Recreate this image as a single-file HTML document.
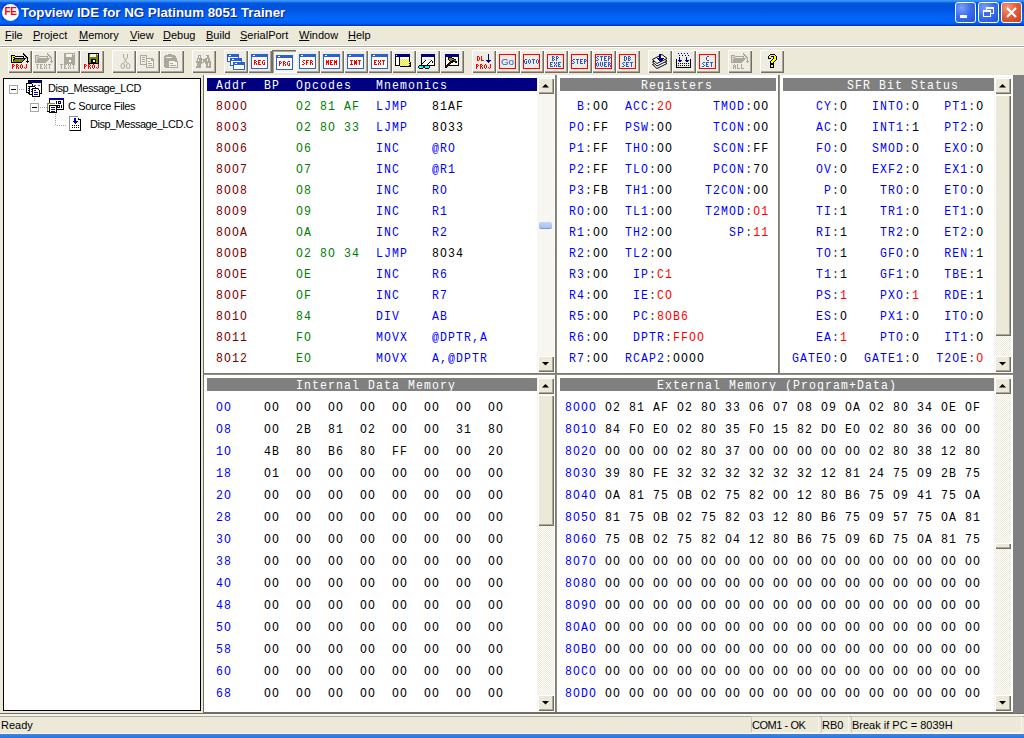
<!DOCTYPE html><html><head><meta charset='utf-8'><style>
*{margin:0;padding:0;box-sizing:border-box}
html,body{width:1024px;height:738px;overflow:hidden;background:#ECE9D8;position:relative}
.a{position:absolute}
.m{position:absolute;font-family:"Liberation Mono", monospace;font-size:11.5px;letter-spacing:1.1px;line-height:20px;white-space:pre;transform:scaleY(1.17);transform-origin:0 0;margin-top:-2px}
.s{position:absolute;font-family:"Liberation Sans", sans-serif;font-size:11px;line-height:14px;white-space:pre;color:#000}
.bl{color:#0000FF} .rd{color:#FF0000} .dr{color:#800000} .gr{color:#008000} .bk{color:#000} .cg{color:#404040}
u{text-decoration:none;border-bottom:1px solid #000}
</style></head><body>
<div class='a' style='left:0;top:0;width:1024px;height:26px;background:linear-gradient(to bottom,#3A8CF3 0px,#3F96F5 1px,#1A74F0 2px,#0058E6 3px,#0054D8 5px,#0053D9 8px,#0055E3 10px,#005CEE 13px,#0064F8 16px,#0063F8 22px,#005AEC 24px,#0038CA 25px,#0030C0 26px)'></div>
<div class='a' style='left:2px;top:4px;width:16px;height:16px;background:#0A3ED8'></div>
<div class='a' style='left:2px;top:4px;width:17px;height:17px;border-radius:50%;background:#fff'></div>
<div class='a' style='left:3px;top:6px;width:15px;font:bold 10px "Liberation Sans", sans-serif;line-height:12px;color:#F00;text-align:center;letter-spacing:-0.5px'>FE</div>
<div class='a' style='left:21px;top:4px;font:bold 13.3px "Liberation Sans", sans-serif;line-height:18px;color:#fff;white-space:pre;text-shadow:1px 1px 0 #0A1E8C'>Topview IDE for NG Platinum 8051 Trainer</div>
<div class='a' style='left:955px;top:2px;width:21px;height:21px;border:1px solid #fff;border-radius:3px;background:radial-gradient(circle at 30% 25%,#7DA2F8 0%,#3C6EF0 45%,#1F50D8 100%);overflow:hidden'><div class='a' style='left:4px;top:12px;width:7px;height:3px;background:#fff'></div></div>
<div class='a' style='left:978px;top:2px;width:21px;height:21px;border:1px solid #fff;border-radius:3px;background:radial-gradient(circle at 30% 25%,#7DA2F8 0%,#3C6EF0 45%,#1F50D8 100%);overflow:hidden'><div class='a' style='left:7px;top:4px;width:8px;height:7px;border:1px solid #fff;border-top-width:2px'></div><div class='a' style='left:4px;top:7px;width:8px;height:7px;border:1px solid #fff;border-top-width:2px;background:#3A6CEE'></div></div>
<div class='a' style='left:1001px;top:2px;width:21px;height:21px;border:1px solid #fff;border-radius:3px;background:radial-gradient(circle at 30% 25%,#F49A80 0%,#E0603A 45%,#C53F1E 100%);overflow:hidden'><svg class='a' style='left:0;top:0' width='19' height='19'><path d='M5 5 L14 14 M14 5 L5 14' stroke='#fff' stroke-width='2'/></svg></div>
<div class='a' style='left:0;top:26px;width:1024px;height:1px;background:#F8F4DE'></div>
<div class='s' style='left:5px;top:28px'><span style='text-decoration:underline;text-underline-offset:1px'>F</span>ile</div>
<div class='s' style='left:33px;top:28px'><span style='text-decoration:underline;text-underline-offset:1px'>P</span>roject</div>
<div class='s' style='left:79px;top:28px'><span style='text-decoration:underline;text-underline-offset:1px'>M</span>emory</div>
<div class='s' style='left:130px;top:28px'><span style='text-decoration:underline;text-underline-offset:1px'>V</span>iew</div>
<div class='s' style='left:163px;top:28px'><span style='text-decoration:underline;text-underline-offset:1px'>D</span>ebug</div>
<div class='s' style='left:206px;top:28px'><span style='text-decoration:underline;text-underline-offset:1px'>B</span>uild</div>
<div class='s' style='left:240px;top:28px'><span style='text-decoration:underline;text-underline-offset:1px'>S</span>erialPort</div>
<div class='s' style='left:299px;top:28px'><span style='text-decoration:underline;text-underline-offset:1px'>W</span>indow</div>
<div class='s' style='left:348px;top:28px'><span style='text-decoration:underline;text-underline-offset:1px'>H</span>elp</div>
<div class='a' style='left:0;top:45px;width:1024px;height:1px;background:#FFFFFF'></div>
<div class='a' style='left:0;top:46px;width:1024px;height:1px;background:#A6A59E'></div>
<div class='a' style='left:0;top:47px;width:1024px;height:1px;background:#FFFFFF'></div>
<div class='a' style='left:8px;top:50px;width:24px;height:23px;background:#EFEDE3;box-shadow:inset 1px 1px 0 #fff,inset -1px -1px 0 #716F64,inset -2px -2px 0 #ACA899'></div>
<svg class='a' style='left:8px;top:50px' width='24' height='23' shape-rendering='crispEdges'><path d='M3 5h4v1h9v2h-1v-1h-8v1h-3v5h-1z' fill='#000'/><path d='M4 6h3v1h-3z M4 7h1v5h-1z' fill='#FFFF00'/><path d='M6 8h12v1h-1l-3 4h-10z' fill='#000'/><path d='M7 9h9l-2 3h-9z' fill='#808000'/><path d='M15 3h1v1h1v1h1v1h1v1h1v5h-1v-4h-1v-1h-1v-1h-1v-1h-1z M17 11h4l-2 2z' fill='#000'/><path d='M4 14h1v1h-1zM5 14h1v1h-1zM4 15h1v1h-1zM6 15h1v1h-1zM4 16h1v1h-1zM5 16h1v1h-1zM4 17h1v1h-1zM4 18h1v1h-1zM8 14h1v1h-1zM9 14h1v1h-1zM8 15h1v1h-1zM10 15h1v1h-1zM8 16h1v1h-1zM9 16h1v1h-1zM8 17h1v1h-1zM10 17h1v1h-1zM8 18h1v1h-1zM10 18h1v1h-1zM13 14h1v1h-1zM12 15h1v1h-1zM14 15h1v1h-1zM12 16h1v1h-1zM14 16h1v1h-1zM12 17h1v1h-1zM14 17h1v1h-1zM13 18h1v1h-1zM18 14h1v1h-1zM18 15h1v1h-1zM18 16h1v1h-1zM16 17h1v1h-1zM18 17h1v1h-1zM17 18h1v1h-1z' fill='#FF0000'/></svg>
<div class='a' style='left:32px;top:50px;width:24px;height:23px;background:#EFEDE3;box-shadow:inset 1px 1px 0 #fff,inset -1px -1px 0 #716F64,inset -2px -2px 0 #ACA899'></div>
<svg class='a' style='left:32px;top:50px' width='24' height='23' shape-rendering='crispEdges'><path d='M3 5h4v1h9v2h-1v-1h-8v1h-3v5h-1z' fill='#ACA899'/><path d='M4 6h3v1h-3z M4 7h1v5h-1z' fill='#D8D5C8'/><path d='M6 8h12v1h-1l-3 4h-10z' fill='#ACA899'/><path d='M7 9h9l-2 3h-9z' fill='#ACA899'/><path d='M15 3h1v1h1v1h1v1h1v1h1v5h-1v-4h-1v-1h-1v-1h-1v-1h-1z M17 11h4l-2 2z' fill='#ACA899'/><path d='M4 14h1v1h-1zM5 14h1v1h-1zM6 14h1v1h-1zM5 15h1v1h-1zM5 16h1v1h-1zM5 17h1v1h-1zM5 18h1v1h-1zM8 14h1v1h-1zM9 14h1v1h-1zM10 14h1v1h-1zM8 15h1v1h-1zM8 16h1v1h-1zM9 16h1v1h-1zM8 17h1v1h-1zM8 18h1v1h-1zM9 18h1v1h-1zM10 18h1v1h-1zM12 14h1v1h-1zM14 14h1v1h-1zM12 15h1v1h-1zM14 15h1v1h-1zM13 16h1v1h-1zM12 17h1v1h-1zM14 17h1v1h-1zM12 18h1v1h-1zM14 18h1v1h-1zM16 14h1v1h-1zM17 14h1v1h-1zM18 14h1v1h-1zM17 15h1v1h-1zM17 16h1v1h-1zM17 17h1v1h-1zM17 18h1v1h-1z' fill='#ACA899'/></svg>
<div class='a' style='left:56px;top:50px;width:24px;height:23px;background:#EFEDE3;box-shadow:inset 1px 1px 0 #fff,inset -1px -1px 0 #716F64,inset -2px -2px 0 #ACA899'></div>
<svg class='a' style='left:56px;top:50px' width='24' height='23' shape-rendering='crispEdges'><path d='M8 3h11v11h-11z' fill='#ACA899'/><path d='M9 4h9v9h-9z' fill='#ACA899'/><path d='M10 4h6v3h-6z' fill='#F4F3EE'/><path d='M17 4h1v1h-1z' fill='#fff'/><path d='M11 9h5v4h-5z' fill='#ACA899'/><path d='M13 10h2v2h-2z' fill='#fff'/><path d='M4 14h1v1h-1zM5 14h1v1h-1zM6 14h1v1h-1zM5 15h1v1h-1zM5 16h1v1h-1zM5 17h1v1h-1zM5 18h1v1h-1zM8 14h1v1h-1zM9 14h1v1h-1zM10 14h1v1h-1zM8 15h1v1h-1zM8 16h1v1h-1zM9 16h1v1h-1zM8 17h1v1h-1zM8 18h1v1h-1zM9 18h1v1h-1zM10 18h1v1h-1zM12 14h1v1h-1zM14 14h1v1h-1zM12 15h1v1h-1zM14 15h1v1h-1zM13 16h1v1h-1zM12 17h1v1h-1zM14 17h1v1h-1zM12 18h1v1h-1zM14 18h1v1h-1zM16 14h1v1h-1zM17 14h1v1h-1zM18 14h1v1h-1zM17 15h1v1h-1zM17 16h1v1h-1zM17 17h1v1h-1zM17 18h1v1h-1z' fill='#ACA899'/></svg>
<div class='a' style='left:80px;top:50px;width:24px;height:23px;background:#EFEDE3;box-shadow:inset 1px 1px 0 #fff,inset -1px -1px 0 #716F64,inset -2px -2px 0 #ACA899'></div>
<svg class='a' style='left:80px;top:50px' width='24' height='23' shape-rendering='crispEdges'><path d='M8 3h11v11h-11z' fill='#000'/><path d='M9 4h9v9h-9z' fill='#808000'/><path d='M10 4h6v3h-6z' fill='#F4F3EE'/><path d='M17 4h1v1h-1z' fill='#fff'/><path d='M11 9h5v4h-5z' fill='#000'/><path d='M13 10h2v2h-2z' fill='#fff'/><path d='M4 14h1v1h-1zM5 14h1v1h-1zM4 15h1v1h-1zM6 15h1v1h-1zM4 16h1v1h-1zM5 16h1v1h-1zM4 17h1v1h-1zM4 18h1v1h-1zM8 14h1v1h-1zM9 14h1v1h-1zM8 15h1v1h-1zM10 15h1v1h-1zM8 16h1v1h-1zM9 16h1v1h-1zM8 17h1v1h-1zM10 17h1v1h-1zM8 18h1v1h-1zM10 18h1v1h-1zM13 14h1v1h-1zM12 15h1v1h-1zM14 15h1v1h-1zM12 16h1v1h-1zM14 16h1v1h-1zM12 17h1v1h-1zM14 17h1v1h-1zM13 18h1v1h-1zM18 14h1v1h-1zM18 15h1v1h-1zM18 16h1v1h-1zM16 17h1v1h-1zM18 17h1v1h-1zM17 18h1v1h-1z' fill='#FF0000'/></svg>
<div class='a' style='left:112px;top:50px;width:24px;height:23px;background:#EFEDE3;box-shadow:inset 1px 1px 0 #fff,inset -1px -1px 0 #716F64,inset -2px -2px 0 #ACA899'></div>
<svg class='a' style='left:112px;top:50px' width='24' height='23' shape-rendering='crispEdges'><g fill='none' stroke='#ACA899' stroke-width='1' shape-rendering='auto'><path d='M11.5 4 L11.5 7 L13.5 10.5 L15.5 7 L15.5 4'/><path d='M13.5 10.5 L11.5 13.5 M13.5 10.5 L15.5 13.5'/><ellipse cx='10.8' cy='16' rx='1.8' ry='2.5'/><ellipse cx='16.2' cy='16' rx='1.8' ry='2.5'/></g></svg>
<div class='a' style='left:136px;top:50px;width:24px;height:23px;background:#EFEDE3;box-shadow:inset 1px 1px 0 #fff,inset -1px -1px 0 #716F64,inset -2px -2px 0 #ACA899'></div>
<svg class='a' style='left:136px;top:50px' width='24' height='23' shape-rendering='crispEdges'><path d='M4 5h6l1 1v3h-1v-3h-5v8h5v1h-6z' fill='#ACA899'/><path d='M6 7h3v1h-3z M6 9h3v1h-3z M6 11h3v1h-3z' fill='#ACA899'/><path d='M10 8h6l2 2v8h-8z' fill='#ACA899'/><path d='M11 9h4v2h2v6h-6z' fill='#F4F3EE'/><path d='M12 11h2v1h-2z M12 13h4v1h-4z M12 15h4v1h-4z' fill='#ACA899'/></svg>
<div class='a' style='left:160px;top:50px;width:24px;height:23px;background:#EFEDE3;box-shadow:inset 1px 1px 0 #fff,inset -1px -1px 0 #716F64,inset -2px -2px 0 #ACA899'></div>
<svg class='a' style='left:160px;top:50px' width='24' height='23' shape-rendering='crispEdges'><path d='M4 6h1v-1h3v-1h4v1h3v1h1v2h1v2h-8v8h-4v-1h-1z' fill='#ACA899'/><path d='M6 7h6v1h-6z' fill='#F4F3EE'/><path d='M8 10h8l2 2v6h-10z' fill='#ACA899'/><path d='M9 11h6v1h2v5h-8z' fill='#F4F3EE'/><path d='M10 13h3v1h-3z M10 15h6v1h-6z' fill='#ACA899'/></svg>
<div class='a' style='left:192px;top:50px;width:24px;height:23px;background:#EFEDE3;box-shadow:inset 1px 1px 0 #fff,inset -1px -1px 0 #716F64,inset -2px -2px 0 #ACA899'></div>
<svg class='a' style='left:192px;top:50px' width='24' height='23' shape-rendering='crispEdges'><path d='M6 5h3v3h1v1h3v-1h1v-3h3v3h1v3h1v7h-5v-4h-1v-1h-3v1h-1v4h-5v-7h1v-3h1z' fill='#ACA899'/><path d='M7 6h1v2h-1z M14 6h1v2h-1z M6 9h1v2h-1z M10 10h1v2h-1z M15 9h1v2h-1z M4 13h1v3h-1z M12 12h1v2h-1z M16 13h1v3h-1z M10 14h1v1h-1z' fill='#F4F3EE'/></svg>
<div class='a' style='left:224px;top:50px;width:24px;height:23px;background:#EFEDE3;box-shadow:inset 1px 1px 0 #fff,inset -1px -1px 0 #716F64,inset -2px -2px 0 #ACA899'></div>
<svg class='a' style='left:224px;top:50px' width='24' height='23' shape-rendering='crispEdges'><path d='M3 4h12v8h-12z' fill='#2A62D0'/><path d='M4 7h10v4h-10z' fill='#fff'/><path d='M5 5h2v1h-2z' fill='#fff'/><path d='M6 8h12v8h-12z' fill='#2A62D0'/><path d='M7 11h10v4h-10z' fill='#fff'/><path d='M8 9h2v1h-2z' fill='#fff'/><path d='M9 12h12v8h-12z' fill='#2A62D0'/><path d='M10 15h10v4h-10z' fill='#fff'/><path d='M11 13h2v1h-2z' fill='#fff'/></svg>
<div class='a' style='left:248px;top:50px;width:24px;height:23px;background:#EFEDE3;box-shadow:inset 1px 1px 0 #fff,inset -1px -1px 0 #716F64,inset -2px -2px 0 #ACA899'></div>
<svg class='a' style='left:248px;top:50px' width='24' height='23' shape-rendering='crispEdges'><path d='M3 4h17v15h-17z' fill='#2A62D0'/><path d='M4 7h15v11h-15z' fill='#fff'/><path d='M5 5h2v1h-2z' fill='#fff'/><path d='M6 10h1v1h-1zM7 10h1v1h-1zM6 11h1v1h-1zM8 11h1v1h-1zM6 12h1v1h-1zM7 12h1v1h-1zM6 13h1v1h-1zM8 13h1v1h-1zM6 14h1v1h-1zM8 14h1v1h-1zM10 10h1v1h-1zM11 10h1v1h-1zM12 10h1v1h-1zM10 11h1v1h-1zM10 12h1v1h-1zM11 12h1v1h-1zM10 13h1v1h-1zM10 14h1v1h-1zM11 14h1v1h-1zM12 14h1v1h-1zM15 10h1v1h-1zM16 10h1v1h-1zM14 11h1v1h-1zM14 12h1v1h-1zM16 12h1v1h-1zM14 13h1v1h-1zM16 13h1v1h-1zM15 14h1v1h-1zM16 14h1v1h-1z' fill='#FF0000'/></svg>
<div class='a' style='left:272px;top:50px;width:24px;height:23px;background:#F5F4EE;box-shadow:inset 1px 1px 0 #716F64,inset 2px 2px 0 #ACA899,inset -1px -1px 0 #fff'></div>
<svg class='a' style='left:272px;top:50px' width='24' height='23' shape-rendering='crispEdges'><path d='M4 5h17v15h-17z' fill='#2A62D0'/><path d='M5 8h15v11h-15z' fill='#fff'/><path d='M6 6h2v1h-2z' fill='#fff'/><path d='M7 11h1v1h-1zM8 11h1v1h-1zM7 12h1v1h-1zM9 12h1v1h-1zM7 13h1v1h-1zM8 13h1v1h-1zM7 14h1v1h-1zM7 15h1v1h-1zM11 11h1v1h-1zM12 11h1v1h-1zM11 12h1v1h-1zM13 12h1v1h-1zM11 13h1v1h-1zM12 13h1v1h-1zM11 14h1v1h-1zM13 14h1v1h-1zM11 15h1v1h-1zM13 15h1v1h-1zM16 11h1v1h-1zM17 11h1v1h-1zM15 12h1v1h-1zM15 13h1v1h-1zM17 13h1v1h-1zM15 14h1v1h-1zM17 14h1v1h-1zM16 15h1v1h-1zM17 15h1v1h-1z' fill='#FF0000'/></svg>
<div class='a' style='left:296px;top:50px;width:24px;height:23px;background:#EFEDE3;box-shadow:inset 1px 1px 0 #fff,inset -1px -1px 0 #716F64,inset -2px -2px 0 #ACA899'></div>
<svg class='a' style='left:296px;top:50px' width='24' height='23' shape-rendering='crispEdges'><path d='M3 4h17v15h-17z' fill='#2A62D0'/><path d='M4 7h15v11h-15z' fill='#fff'/><path d='M5 5h2v1h-2z' fill='#fff'/><path d='M7 10h1v1h-1zM8 10h1v1h-1zM6 11h1v1h-1zM7 12h1v1h-1zM8 13h1v1h-1zM6 14h1v1h-1zM7 14h1v1h-1zM10 10h1v1h-1zM11 10h1v1h-1zM12 10h1v1h-1zM10 11h1v1h-1zM10 12h1v1h-1zM11 12h1v1h-1zM10 13h1v1h-1zM10 14h1v1h-1zM14 10h1v1h-1zM15 10h1v1h-1zM14 11h1v1h-1zM16 11h1v1h-1zM14 12h1v1h-1zM15 12h1v1h-1zM14 13h1v1h-1zM16 13h1v1h-1zM14 14h1v1h-1zM16 14h1v1h-1z' fill='#FF0000'/></svg>
<div class='a' style='left:320px;top:50px;width:24px;height:23px;background:#EFEDE3;box-shadow:inset 1px 1px 0 #fff,inset -1px -1px 0 #716F64,inset -2px -2px 0 #ACA899'></div>
<svg class='a' style='left:320px;top:50px' width='24' height='23' shape-rendering='crispEdges'><path d='M3 4h17v15h-17z' fill='#2A62D0'/><path d='M4 7h15v11h-15z' fill='#fff'/><path d='M5 5h2v1h-2z' fill='#fff'/><path d='M6 10h1v1h-1zM8 10h1v1h-1zM6 11h1v1h-1zM7 11h1v1h-1zM8 11h1v1h-1zM6 12h1v1h-1zM7 12h1v1h-1zM8 12h1v1h-1zM6 13h1v1h-1zM8 13h1v1h-1zM6 14h1v1h-1zM8 14h1v1h-1zM10 10h1v1h-1zM11 10h1v1h-1zM12 10h1v1h-1zM10 11h1v1h-1zM10 12h1v1h-1zM11 12h1v1h-1zM10 13h1v1h-1zM10 14h1v1h-1zM11 14h1v1h-1zM12 14h1v1h-1zM14 10h1v1h-1zM16 10h1v1h-1zM14 11h1v1h-1zM15 11h1v1h-1zM16 11h1v1h-1zM14 12h1v1h-1zM15 12h1v1h-1zM16 12h1v1h-1zM14 13h1v1h-1zM16 13h1v1h-1zM14 14h1v1h-1zM16 14h1v1h-1z' fill='#FF0000'/></svg>
<div class='a' style='left:344px;top:50px;width:24px;height:23px;background:#EFEDE3;box-shadow:inset 1px 1px 0 #fff,inset -1px -1px 0 #716F64,inset -2px -2px 0 #ACA899'></div>
<svg class='a' style='left:344px;top:50px' width='24' height='23' shape-rendering='crispEdges'><path d='M3 4h17v15h-17z' fill='#2A62D0'/><path d='M4 7h15v11h-15z' fill='#fff'/><path d='M5 5h2v1h-2z' fill='#fff'/><path d='M6 10h1v1h-1zM7 10h1v1h-1zM8 10h1v1h-1zM7 11h1v1h-1zM7 12h1v1h-1zM7 13h1v1h-1zM6 14h1v1h-1zM7 14h1v1h-1zM8 14h1v1h-1zM10 10h1v1h-1zM12 10h1v1h-1zM10 11h1v1h-1zM11 11h1v1h-1zM12 11h1v1h-1zM10 12h1v1h-1zM11 12h1v1h-1zM12 12h1v1h-1zM10 13h1v1h-1zM11 13h1v1h-1zM12 13h1v1h-1zM10 14h1v1h-1zM12 14h1v1h-1zM14 10h1v1h-1zM15 10h1v1h-1zM16 10h1v1h-1zM15 11h1v1h-1zM15 12h1v1h-1zM15 13h1v1h-1zM15 14h1v1h-1z' fill='#FF0000'/></svg>
<div class='a' style='left:368px;top:50px;width:24px;height:23px;background:#EFEDE3;box-shadow:inset 1px 1px 0 #fff,inset -1px -1px 0 #716F64,inset -2px -2px 0 #ACA899'></div>
<svg class='a' style='left:368px;top:50px' width='24' height='23' shape-rendering='crispEdges'><path d='M3 4h17v15h-17z' fill='#2A62D0'/><path d='M4 7h15v11h-15z' fill='#fff'/><path d='M5 5h2v1h-2z' fill='#fff'/><path d='M6 10h1v1h-1zM7 10h1v1h-1zM8 10h1v1h-1zM6 11h1v1h-1zM6 12h1v1h-1zM7 12h1v1h-1zM6 13h1v1h-1zM6 14h1v1h-1zM7 14h1v1h-1zM8 14h1v1h-1zM10 10h1v1h-1zM12 10h1v1h-1zM10 11h1v1h-1zM12 11h1v1h-1zM11 12h1v1h-1zM10 13h1v1h-1zM12 13h1v1h-1zM10 14h1v1h-1zM12 14h1v1h-1zM14 10h1v1h-1zM15 10h1v1h-1zM16 10h1v1h-1zM15 11h1v1h-1zM15 12h1v1h-1zM15 13h1v1h-1zM15 14h1v1h-1z' fill='#FF0000'/></svg>
<div class='a' style='left:392px;top:50px;width:24px;height:23px;background:#EFEDE3;box-shadow:inset 1px 1px 0 #fff,inset -1px -1px 0 #716F64,inset -2px -2px 0 #ACA899'></div>
<svg class='a' style='left:392px;top:50px' width='24' height='23' shape-rendering='crispEdges'><path d='M3 4h15v12h-15z' fill='#000'/><path d='M3 4h15v3h-15z' fill='#000080'/><path d='M4 5h1v1h-1z' fill='#fff'/><path d='M4 7h13v8h-13z' fill='#fff'/><path d='M7 7h1v9h-1z' fill='#000'/><path d='M8 9h9v7h-9z' fill='#F8F8E0'/><path d='M8 9h1v1h-1zM10 9h1v1h-1zM12 9h1v1h-1zM14 9h1v1h-1zM16 9h1v1h-1zM9 10h1v1h-1zM11 10h1v1h-1zM13 10h1v1h-1zM15 10h1v1h-1zM17 10h1v1h-1zM8 11h1v1h-1zM10 11h1v1h-1zM12 11h1v1h-1zM14 11h1v1h-1zM16 11h1v1h-1zM9 12h1v1h-1zM11 12h1v1h-1zM13 12h1v1h-1zM15 12h1v1h-1zM17 12h1v1h-1zM8 13h1v1h-1zM10 13h1v1h-1zM12 13h1v1h-1zM14 13h1v1h-1zM16 13h1v1h-1zM9 14h1v1h-1zM11 14h1v1h-1zM13 14h1v1h-1zM15 14h1v1h-1zM17 14h1v1h-1zM8 15h1v1h-1zM10 15h1v1h-1zM12 15h1v1h-1zM14 15h1v1h-1zM16 15h1v1h-1z' fill='#F0F000'/><path d='M8 16h11v1h-11z M18 12h1v5h-1z' fill='#000'/><path d='M17 8h1v4h-1z' fill='#000'/></svg>
<div class='a' style='left:416px;top:50px;width:24px;height:23px;background:#EFEDE3;box-shadow:inset 1px 1px 0 #fff,inset -1px -1px 0 #716F64,inset -2px -2px 0 #ACA899'></div>
<svg class='a' style='left:416px;top:50px' width='24' height='23' shape-rendering='crispEdges'><path d='M5 4h14v12h-14z' fill='#000'/><path d='M6 7h12v8h-12z' fill='#fff'/><path d='M5 4h14v3h-14z' fill='#000080'/><path d='M8 9h2v1h-2z M12 9h3v1h-3z' fill='#D8D8D8'/><path d='M5 14h1v1h-1z M6 13h1v1h-1z M7 12h1v1h-1z M8 11h1v1h-1z M9 10h1v1h-1z M11 14h1v1h-1z M12 13h1v1h-1z M13 12h1v1h-1z M14 11h1v1h-1z M15 10h1v1h-1z M16 11h1v2h-1z' fill='#000'/><path d='M3 15h4v1h1v2h-1v1h-4v-1h-1v-2h1z M9 15h4v1h1v2h-1v1h-4v-1h-1v-2h1z M7 16h2v1h-2z' fill='#000'/><path d='M3 16h4v2h-4z M9 16h4v2h-4z' fill='#00FFFF'/></svg>
<div class='a' style='left:440px;top:50px;width:24px;height:23px;background:#EFEDE3;box-shadow:inset 1px 1px 0 #fff,inset -1px -1px 0 #716F64,inset -2px -2px 0 #ACA899'></div>
<svg class='a' style='left:440px;top:50px' width='24' height='23' shape-rendering='crispEdges'><path d='M5 4h14v12h-14z' fill='#000'/><path d='M6 7h12v8h-12z' fill='#fff'/><path d='M5 4h14v3h-14z' fill='#000080'/><path d='M8 7h4v1h2v1h2v2h1v2h-2v-1h-2v1h-2v-2h-2v-1h-1z' fill='#000'/><path d='M9 8h3v1h2v1h2v1h-2v-1h-2v1h-2v-1h-1z' fill='#808000'/><path d='M10 11h2v2h-1v1h-1v1h-1v1h-1v1h-1v1h-2v-2h1v-1h1v-1h1v-1h1v-1h1z' fill='#000'/><path d='M10 12h1v1h-1v1h-1v1h-1v1h-1v1h-1v-1h1v-1h1v-1h1v-1h1z' fill='#800000'/></svg>
<div class='a' style='left:472px;top:50px;width:24px;height:23px;background:#EFEDE3;box-shadow:inset 1px 1px 0 #fff,inset -1px -1px 0 #716F64,inset -2px -2px 0 #ACA899'></div>
<svg class='a' style='left:472px;top:50px' width='24' height='23' shape-rendering='crispEdges'><path d='M5 6h1v1h-1zM6 6h1v1h-1zM5 7h1v1h-1zM7 7h1v1h-1zM5 8h1v1h-1zM7 8h1v1h-1zM5 9h1v1h-1zM7 9h1v1h-1zM5 10h1v1h-1zM6 10h1v1h-1zM9 6h1v1h-1zM9 7h1v1h-1zM9 8h1v1h-1zM9 9h1v1h-1zM9 10h1v1h-1zM10 10h1v1h-1zM11 10h1v1h-1z' fill='#FF0000'/><path d='M4 14h1v1h-1zM5 14h1v1h-1zM4 15h1v1h-1zM6 15h1v1h-1zM4 16h1v1h-1zM5 16h1v1h-1zM4 17h1v1h-1zM4 18h1v1h-1zM8 14h1v1h-1zM9 14h1v1h-1zM8 15h1v1h-1zM10 15h1v1h-1zM8 16h1v1h-1zM9 16h1v1h-1zM8 17h1v1h-1zM10 17h1v1h-1zM8 18h1v1h-1zM10 18h1v1h-1zM13 14h1v1h-1zM12 15h1v1h-1zM14 15h1v1h-1zM12 16h1v1h-1zM14 16h1v1h-1zM12 17h1v1h-1zM14 17h1v1h-1zM13 18h1v1h-1zM18 14h1v1h-1zM18 15h1v1h-1zM18 16h1v1h-1zM16 17h1v1h-1zM18 17h1v1h-1zM17 18h1v1h-1z' fill='#FF0000'/><path d='M16 4h1v7h-1z M14 10h5v1h-1v1h-1v1h-1v-1h-1v-1h-1z' fill='#000080'/></svg>
<div class='a' style='left:496px;top:50px;width:24px;height:23px;background:#EFEDE3;box-shadow:inset 1px 1px 0 #fff,inset -1px -1px 0 #716F64,inset -2px -2px 0 #ACA899'></div>
<svg class='a' style='left:496px;top:50px' width='24' height='23' shape-rendering='crispEdges'><path d='M3 4h17v15h-17z M4 5v13h15v-13z' fill='#FF0000' fill-rule='evenodd'/><text x='11.5' y='14.6' font-family='Liberation Sans, sans-serif' font-size='9.6' fill='#2A5CC8' text-anchor='middle' shape-rendering='auto'>Go</text></svg>
<div class='a' style='left:520px;top:50px;width:24px;height:23px;background:#EFEDE3;box-shadow:inset 1px 1px 0 #fff,inset -1px -1px 0 #716F64,inset -2px -2px 0 #ACA899'></div>
<svg class='a' style='left:520px;top:50px' width='24' height='23' shape-rendering='crispEdges'><path d='M3 4h17v15h-17z M4 5v13h15v-13z' fill='#FF0000' fill-rule='evenodd'/><path d='M5 9h1v1h-1zM6 9h1v1h-1zM4 10h1v1h-1zM4 11h1v1h-1zM6 11h1v1h-1zM4 12h1v1h-1zM6 12h1v1h-1zM5 13h1v1h-1zM6 13h1v1h-1zM9 9h1v1h-1zM8 10h1v1h-1zM10 10h1v1h-1zM8 11h1v1h-1zM10 11h1v1h-1zM8 12h1v1h-1zM10 12h1v1h-1zM9 13h1v1h-1zM12 9h1v1h-1zM13 9h1v1h-1zM14 9h1v1h-1zM13 10h1v1h-1zM13 11h1v1h-1zM13 12h1v1h-1zM13 13h1v1h-1zM17 9h1v1h-1zM16 10h1v1h-1zM18 10h1v1h-1zM16 11h1v1h-1zM18 11h1v1h-1zM16 12h1v1h-1zM18 12h1v1h-1zM17 13h1v1h-1z' fill='#2A5CC8'/></svg>
<div class='a' style='left:544px;top:50px;width:24px;height:23px;background:#EFEDE3;box-shadow:inset 1px 1px 0 #fff,inset -1px -1px 0 #716F64,inset -2px -2px 0 #ACA899'></div>
<svg class='a' style='left:544px;top:50px' width='24' height='23' shape-rendering='crispEdges'><path d='M3 4h17v15h-17z M4 5v13h15v-13z' fill='#FF0000' fill-rule='evenodd'/><path d='M8 6h1v1h-1zM9 6h1v1h-1zM8 7h1v1h-1zM10 7h1v1h-1zM8 8h1v1h-1zM9 8h1v1h-1zM8 9h1v1h-1zM10 9h1v1h-1zM8 10h1v1h-1zM9 10h1v1h-1zM12 6h1v1h-1zM13 6h1v1h-1zM12 7h1v1h-1zM14 7h1v1h-1zM12 8h1v1h-1zM13 8h1v1h-1zM12 9h1v1h-1zM12 10h1v1h-1z' fill='#2A5CC8'/><path d='M6 12h1v1h-1zM7 12h1v1h-1zM8 12h1v1h-1zM6 13h1v1h-1zM6 14h1v1h-1zM7 14h1v1h-1zM6 15h1v1h-1zM6 16h1v1h-1zM7 16h1v1h-1zM8 16h1v1h-1zM10 12h1v1h-1zM12 12h1v1h-1zM10 13h1v1h-1zM12 13h1v1h-1zM11 14h1v1h-1zM10 15h1v1h-1zM12 15h1v1h-1zM10 16h1v1h-1zM12 16h1v1h-1zM14 12h1v1h-1zM15 12h1v1h-1zM16 12h1v1h-1zM14 13h1v1h-1zM14 14h1v1h-1zM15 14h1v1h-1zM14 15h1v1h-1zM14 16h1v1h-1zM15 16h1v1h-1zM16 16h1v1h-1z' fill='#2A5CC8'/></svg>
<div class='a' style='left:568px;top:50px;width:24px;height:23px;background:#EFEDE3;box-shadow:inset 1px 1px 0 #fff,inset -1px -1px 0 #716F64,inset -2px -2px 0 #ACA899'></div>
<svg class='a' style='left:568px;top:50px' width='24' height='23' shape-rendering='crispEdges'><path d='M3 4h17v15h-17z M4 5v13h15v-13z' fill='#FF0000' fill-rule='evenodd'/><path d='M5 9h1v1h-1zM6 9h1v1h-1zM4 10h1v1h-1zM5 11h1v1h-1zM6 12h1v1h-1zM4 13h1v1h-1zM5 13h1v1h-1zM8 9h1v1h-1zM9 9h1v1h-1zM10 9h1v1h-1zM9 10h1v1h-1zM9 11h1v1h-1zM9 12h1v1h-1zM9 13h1v1h-1zM12 9h1v1h-1zM13 9h1v1h-1zM14 9h1v1h-1zM12 10h1v1h-1zM12 11h1v1h-1zM13 11h1v1h-1zM12 12h1v1h-1zM12 13h1v1h-1zM13 13h1v1h-1zM14 13h1v1h-1zM16 9h1v1h-1zM17 9h1v1h-1zM16 10h1v1h-1zM18 10h1v1h-1zM16 11h1v1h-1zM17 11h1v1h-1zM16 12h1v1h-1zM16 13h1v1h-1z' fill='#2A5CC8'/></svg>
<div class='a' style='left:592px;top:50px;width:24px;height:23px;background:#EFEDE3;box-shadow:inset 1px 1px 0 #fff,inset -1px -1px 0 #716F64,inset -2px -2px 0 #ACA899'></div>
<svg class='a' style='left:592px;top:50px' width='24' height='23' shape-rendering='crispEdges'><path d='M3 4h17v15h-17z M4 5v13h15v-13z' fill='#FF0000' fill-rule='evenodd'/><path d='M5 6h1v1h-1zM6 6h1v1h-1zM4 7h1v1h-1zM5 8h1v1h-1zM6 9h1v1h-1zM4 10h1v1h-1zM5 10h1v1h-1zM8 6h1v1h-1zM9 6h1v1h-1zM10 6h1v1h-1zM9 7h1v1h-1zM9 8h1v1h-1zM9 9h1v1h-1zM9 10h1v1h-1zM12 6h1v1h-1zM13 6h1v1h-1zM14 6h1v1h-1zM12 7h1v1h-1zM12 8h1v1h-1zM13 8h1v1h-1zM12 9h1v1h-1zM12 10h1v1h-1zM13 10h1v1h-1zM14 10h1v1h-1zM16 6h1v1h-1zM17 6h1v1h-1zM16 7h1v1h-1zM18 7h1v1h-1zM16 8h1v1h-1zM17 8h1v1h-1zM16 9h1v1h-1zM16 10h1v1h-1z' fill='#2A5CC8'/><path d='M5 12h1v1h-1zM4 13h1v1h-1zM6 13h1v1h-1zM4 14h1v1h-1zM6 14h1v1h-1zM4 15h1v1h-1zM6 15h1v1h-1zM5 16h1v1h-1zM8 12h1v1h-1zM10 12h1v1h-1zM8 13h1v1h-1zM10 13h1v1h-1zM8 14h1v1h-1zM10 14h1v1h-1zM8 15h1v1h-1zM10 15h1v1h-1zM9 16h1v1h-1zM12 12h1v1h-1zM13 12h1v1h-1zM14 12h1v1h-1zM12 13h1v1h-1zM12 14h1v1h-1zM13 14h1v1h-1zM12 15h1v1h-1zM12 16h1v1h-1zM13 16h1v1h-1zM14 16h1v1h-1zM16 12h1v1h-1zM17 12h1v1h-1zM16 13h1v1h-1zM18 13h1v1h-1zM16 14h1v1h-1zM17 14h1v1h-1zM16 15h1v1h-1zM18 15h1v1h-1zM16 16h1v1h-1zM18 16h1v1h-1z' fill='#2A5CC8'/></svg>
<div class='a' style='left:616px;top:50px;width:24px;height:23px;background:#EFEDE3;box-shadow:inset 1px 1px 0 #fff,inset -1px -1px 0 #716F64,inset -2px -2px 0 #ACA899'></div>
<svg class='a' style='left:616px;top:50px' width='24' height='23' shape-rendering='crispEdges'><path d='M3 4h17v15h-17z M4 5v13h15v-13z' fill='#FF0000' fill-rule='evenodd'/><path d='M8 6h1v1h-1zM9 6h1v1h-1zM8 7h1v1h-1zM10 7h1v1h-1zM8 8h1v1h-1zM10 8h1v1h-1zM8 9h1v1h-1zM10 9h1v1h-1zM8 10h1v1h-1zM9 10h1v1h-1zM12 6h1v1h-1zM13 6h1v1h-1zM12 7h1v1h-1zM14 7h1v1h-1zM12 8h1v1h-1zM13 8h1v1h-1zM12 9h1v1h-1zM14 9h1v1h-1zM12 10h1v1h-1zM13 10h1v1h-1z' fill='#2A5CC8'/><path d='M7 12h1v1h-1zM8 12h1v1h-1zM6 13h1v1h-1zM7 14h1v1h-1zM8 15h1v1h-1zM6 16h1v1h-1zM7 16h1v1h-1zM10 12h1v1h-1zM11 12h1v1h-1zM12 12h1v1h-1zM10 13h1v1h-1zM10 14h1v1h-1zM11 14h1v1h-1zM10 15h1v1h-1zM10 16h1v1h-1zM11 16h1v1h-1zM12 16h1v1h-1zM14 12h1v1h-1zM15 12h1v1h-1zM16 12h1v1h-1zM15 13h1v1h-1zM15 14h1v1h-1zM15 15h1v1h-1zM15 16h1v1h-1z' fill='#2A5CC8'/></svg>
<div class='a' style='left:648px;top:50px;width:24px;height:23px;background:#EFEDE3;box-shadow:inset 1px 1px 0 #fff,inset -1px -1px 0 #716F64,inset -2px -2px 0 #ACA899'></div>
<svg class='a' style='left:648px;top:50px' width='24' height='23' shape-rendering='crispEdges'><g shape-rendering='auto' stroke='#000' stroke-width='1' fill='#fff'><path d='M4.5 14.5 L9 18.5 L19 13.5 L14 9.5 Z'/><path d='M4.5 12.0 L9 16.0 L19 11.0 L14 7.0 Z'/><path d='M4.5 9.5 L9 13.5 L19 8.5 L14 4.5 Z'/></g><path d='M11 4h2v4h3l-4 4-4-4h3z' fill='#000080'/></svg>
<div class='a' style='left:672px;top:50px;width:24px;height:23px;background:#EFEDE3;box-shadow:inset 1px 1px 0 #fff,inset -1px -1px 0 #716F64,inset -2px -2px 0 #ACA899'></div>
<svg class='a' style='left:672px;top:50px' width='24' height='23' shape-rendering='crispEdges'><path d='M4 9h1v8h13v-8h1v9h-15z' fill='#000'/><path d='M6 13h1v1h-1z M8 13h1v1h-1z M10 13h1v1h-1z M12 13h1v1h-1z M14 13h1v1h-1z M16 13h1v1h-1z M6 15h1v1h-1z M8 15h1v1h-1z M10 15h1v1h-1z M12 15h1v1h-1z M14 15h1v1h-1z M16 15h1v1h-1z' fill='#000'/><path d='M6 3h1v1h-1z M9 3h1v1h-1z M12 3h1v1h-1z M15 3h1v1h-1z M7 5h1v1h-1z M10 5h1v1h-1z M13 5h1v1h-1z M16 5h1v1h-1z' fill='#000080'/><path d='M7 7h1v3h2l-2.5 2.5-2.5-2.5h2z M14 7h1v3h2l-2.5 2.5-2.5-2.5h2z' fill='#000080'/></svg>
<div class='a' style='left:696px;top:50px;width:24px;height:23px;background:#EFEDE3;box-shadow:inset 1px 1px 0 #fff,inset -1px -1px 0 #716F64,inset -2px -2px 0 #ACA899'></div>
<svg class='a' style='left:696px;top:50px' width='24' height='23' shape-rendering='crispEdges'><path d='M3 4h17v15h-17z M4 5v13h15v-13z' fill='#FF0000' fill-rule='evenodd'/><path d='M11 6h1v1h-1zM12 6h1v1h-1zM10 7h1v1h-1zM10 8h1v1h-1zM10 9h1v1h-1zM11 10h1v1h-1zM12 10h1v1h-1z' fill='#2A5CC8'/><path d='M7 12h1v1h-1zM8 12h1v1h-1zM6 13h1v1h-1zM7 14h1v1h-1zM8 15h1v1h-1zM6 16h1v1h-1zM7 16h1v1h-1zM10 12h1v1h-1zM11 12h1v1h-1zM12 12h1v1h-1zM10 13h1v1h-1zM10 14h1v1h-1zM11 14h1v1h-1zM10 15h1v1h-1zM10 16h1v1h-1zM11 16h1v1h-1zM12 16h1v1h-1zM14 12h1v1h-1zM15 12h1v1h-1zM16 12h1v1h-1zM15 13h1v1h-1zM15 14h1v1h-1zM15 15h1v1h-1zM15 16h1v1h-1z' fill='#2A5CC8'/></svg>
<div class='a' style='left:728px;top:50px;width:24px;height:23px;background:#EFEDE3;box-shadow:inset 1px 1px 0 #fff,inset -1px -1px 0 #716F64,inset -2px -2px 0 #ACA899'></div>
<svg class='a' style='left:728px;top:50px' width='24' height='23' shape-rendering='crispEdges'><path d='M3 5h4v1h9v2h-1v-1h-8v1h-3v5h-1z' fill='#ACA899'/><path d='M4 6h3v1h-3z M4 7h1v5h-1z' fill='#D8D5C8'/><path d='M6 8h12v1h-1l-3 4h-10z' fill='#ACA899'/><path d='M7 9h9l-2 3h-9z' fill='#ACA899'/><path d='M15 3h1v1h1v1h1v1h1v1h1v5h-1v-4h-1v-1h-1v-1h-1v-1h-1z M17 11h4l-2 2z' fill='#ACA899'/><path d='M6 14h1v1h-1zM5 15h1v1h-1zM7 15h1v1h-1zM5 16h1v1h-1zM6 16h1v1h-1zM7 16h1v1h-1zM5 17h1v1h-1zM7 17h1v1h-1zM5 18h1v1h-1zM7 18h1v1h-1zM9 14h1v1h-1zM9 15h1v1h-1zM9 16h1v1h-1zM9 17h1v1h-1zM9 18h1v1h-1zM10 18h1v1h-1zM11 18h1v1h-1zM13 14h1v1h-1zM13 15h1v1h-1zM13 16h1v1h-1zM13 17h1v1h-1zM13 18h1v1h-1zM14 18h1v1h-1zM15 18h1v1h-1z' fill='#ACA899'/></svg>
<div class='a' style='left:760px;top:50px;width:24px;height:23px;background:#EFEDE3;box-shadow:inset 1px 1px 0 #fff,inset -1px -1px 0 #716F64,inset -2px -2px 0 #ACA899'></div>
<svg class='a' style='left:760px;top:50px' width='24' height='23' shape-rendering='crispEdges'><path d='M8 6h1v-1h1v-1h5v1h1v1h1v4h-1v1h-1v1h-1v2h-4v-3h1v-1h1v-1h1v-2h-2v2h-3z M10 14h4v4h-4z' fill='#000'/><path d='M9 6h1v-1h5v1h1v4h-1v1h-1v1h-1v1h-2v-2h1v-1h1v-1h1v-3h-3v2h-2z M11 15h2v2h-2z' fill='#FFFF00'/></svg>
<div class='a' style='left:3px;top:78px;width:198px;height:633px;border:1px solid #000;background:#fff'></div>
<div class='s' style='left:48px;top:81px;letter-spacing:-0.5px'>Disp_Message_LCD</div>
<div class='s' style='left:68px;top:99px;letter-spacing:-0.35px'>C Source Files</div>
<div class='s' style='left:90px;top:117px;letter-spacing:-0.5px'>Disp_Message_LCD.C</div>
<svg class='a' style='left:0px;top:78px' width='200' height='60' shape-rendering='crispEdges'><g transform='translate(0,-78)'><path d='M19 89h1v1h-1zM21 89h1v1h-1zM23 89h1v1h-1zM34 96h1v1h-1zM34 98h1v1h-1zM34 100h1v1h-1zM40 107h1v1h-1zM42 107h1v1h-1zM44 107h1v1h-1zM46 107h1v1h-1zM55 114h1v1h-1zM55 116h1v1h-1zM55 118h1v1h-1zM55 120h1v1h-1zM55 122h1v1h-1zM55 124h1v1h-1zM57 125h1v1h-1zM59 125h1v1h-1zM61 125h1v1h-1zM63 125h1v1h-1zM65 125h1v1h-1z' fill='#A0A0A0'/><path d='M9 85h9v9h-9z M10 86v7h7v-7z M30 103h9v9h-9z M31 104v7h7v-7z' fill='#A8A8A8' fill-rule='evenodd'/><path d='M11 89h5v1h-5z M32 107h5v1h-5z' fill='#000'/></g></svg>
<svg class='a' style='left:25px;top:79px' width='18' height='18' shape-rendering='crispEdges'><path d='M3 1h14v14h-14z' fill='#000'/><path d='M4 2h12v2h-12z' fill='#0000A0'/><path d='M4 4h12v10h-12z' fill='#fff'/><path d='M9 6h2v1h-2z M13 6h2v1h-2z M12 9h2v1h-2z' fill='#606060'/><path d='M1 4h6v1h1v9h-7z' fill='#000'/><path d='M2 5h5v8h-5z' fill='#fff'/><path d='M3 7h1v1h-1z M3 9h1v1h-1z M3 11h1v1h-1z' fill='#0000A0'/><path d='M4 7h6v1h1v8h-7z' fill='#000'/><path d='M5 8h5v7h-5z' fill='#fff'/><path d='M6 10h1v1h-1z M6 12h1v1h-1z' fill='#0000A0'/><path d='M7 9h6v1h1v1h1v7h-8z' fill='#000'/><path d='M8 10h5v1h1v6h-6z' fill='#fff'/><path d='M9 11h2v1h-2z M9 13h4v1h-4z M9 15h4v1h-4z' fill='#0000A0'/></svg>
<svg class='a' style='left:46px;top:97px' width='18' height='18' shape-rendering='crispEdges'><path d='M3 1h15v12h-15z' fill='#000'/><path d='M3 1h15v2h-15z' fill='#0000A0'/><path d='M4 3h13v9h-13z' fill='#fff'/><path d='M10 4h1v3h-1z M12 4h3v3h-3z M13 5v1h1v-1z M11 8h3v3h-3z M12 9v1h1v-1z M15 8h1v3h-1z' fill='#000' fill-rule='evenodd'/><path d='M1 6h8v1h-7v7h-1z' fill='#808080'/><path d='M2 7h1v1h-1z M4 7h1v1h-1z M6 7h1v1h-1z M2 9h1v1h-1z M2 11h1v1h-1z' fill='#FFFF00'/><path d='M3 7h1v1h-1z M5 7h1v1h-1z M7 7h1v1h-1z M2 8h1v1h-1z M2 10h1v1h-1z M2 12h1v1h-1z' fill='#fff'/><path d='M3 8h8v8h-8z' fill='#000'/><path d='M4 9h6v6h-6z' fill='#fff'/><path d='M5 10h4v1h-4z M5 12h4v1h-4z M5 14h4v1h-4z' fill='#0000A0'/><path d='M1 14h2v1h-2z' fill='#000'/></svg>
<svg class='a' style='left:68px;top:115px' width='16' height='17' shape-rendering='crispEdges'><path d='M1 1h9v1h1v1h1v1h1v12h-12z' fill='#000'/><path d='M1 1h9v1h-8v14h-1z' fill='#909090'/><path d='M2 2h8v3h2v10h-10z' fill='#fff'/><path d='M10 2h1v1h1v1h-1v-1h-1z' fill='#fff'/><path d='M10 4h2v1h-2z' fill='#000'/><path d='M6 3h2v3h2l-3 3-3-3h2z' fill='#0000A0'/><path d='M4 10h1v1h-1z M6 10h1v1h-1z M8 10h1v1h-1z M10 10h1v1h-1z M4 12h1v1h-1z M6 12h1v1h-1z M8 12h1v1h-1z M10 12h1v1h-1z' fill='#000'/></svg>
<div class='a' style='left:203px;top:75px;width:1px;height:639px;background:#716F64'></div>
<div class='a' style='left:204px;top:76px;width:817px;height:297px;background:#fff'></div>
<div class='a' style='left:204px;top:376px;width:817px;height:336px;background:#fff'></div>
<div class='a' style='left:204px;top:75px;width:809px;height:1px;background:#fff'></div>
<div class='a' style='left:204px;top:76px;width:351px;height:297px;background:#fff'></div>
<div class='a' style='left:557px;top:76px;width:221px;height:297px;background:#fff'></div>
<div class='a' style='left:780px;top:76px;width:233px;height:297px;background:#fff'></div>
<div class='a' style='left:204px;top:375px;width:351px;height:337px;background:#fff'></div>
<div class='a' style='left:557px;top:375px;width:456px;height:337px;background:#fff'></div>
<div class='a' style='left:555px;top:75px;width:2px;height:638px;background:linear-gradient(to right,#716F64,#9C9A8C)'></div>
<div class='a' style='left:778px;top:75px;width:2px;height:299px;background:linear-gradient(to right,#716F64,#9C9A8C)'></div>
<div class='a' style='left:204px;top:373px;width:809px;height:2px;background:linear-gradient(to bottom,#716F64,#9C9A8C)'></div>
<div class='a' style='left:204px;top:712px;width:809px;height:1px;background:#716F64'></div>
<div class='a' style='left:1013px;top:75px;width:11px;height:638px;background:#808080'></div>
<div class='a' style='left:207px;top:78px;width:330px;height:13px;background:#000080'></div>
<div class='a' style='left:560px;top:78px;width:216px;height:13px;background:#808080'></div>
<div class='a' style='left:783px;top:78px;width:211px;height:13px;background:#808080'></div>
<div class='a' style='left:207px;top:378px;width:330px;height:13px;background:#808080'></div>
<div class='a' style='left:560px;top:378px;width:434px;height:13px;background:#808080'></div>
<div class='m' style='left:216px;top:76px;color:#fff'>Addr  BP  Opcodes   Mnemonics</div>
<div class='m' style='left:641px;top:76px;color:#fff'>Registers</div>
<div class='m' style='left:847px;top:76px;color:#fff'>SFR Bit Status</div>
<div class='m' style='left:296px;top:376px;color:#fff'>Internal Data Memory</div>
<div class='m' style='left:657px;top:376px;color:#fff'>External Memory (Program+Data)</div>
<div class='m' style='left:216px;top:97px'><span class='dr'>8OOO</span>      <span class='gr'>O2 81 AF  </span><span class='bl'>LJMP   </span><span class='bk'>81AF</span></div>
<div class='m' style='left:216px;top:118px'><span class='dr'>8OO3</span>      <span class='gr'>O2 8O 33  </span><span class='bl'>LJMP   </span><span class='bk'>8O33</span></div>
<div class='m' style='left:216px;top:139px'><span class='dr'>8OO6</span>      <span class='gr'>O6        </span><span class='bl'>INC    </span><span class='bl'>@RO</span></div>
<div class='m' style='left:216px;top:160px'><span class='dr'>8OO7</span>      <span class='gr'>O7        </span><span class='bl'>INC    </span><span class='bl'>@R1</span></div>
<div class='m' style='left:216px;top:181px'><span class='dr'>8OO8</span>      <span class='gr'>O8        </span><span class='bl'>INC    </span><span class='bl'>RO</span></div>
<div class='m' style='left:216px;top:202px'><span class='dr'>8OO9</span>      <span class='gr'>O9        </span><span class='bl'>INC    </span><span class='bl'>R1</span></div>
<div class='m' style='left:216px;top:223px'><span class='dr'>8OOA</span>      <span class='gr'>OA        </span><span class='bl'>INC    </span><span class='bl'>R2</span></div>
<div class='m' style='left:216px;top:244px'><span class='dr'>8OOB</span>      <span class='gr'>O2 8O 34  </span><span class='bl'>LJMP   </span><span class='bk'>8O34</span></div>
<div class='m' style='left:216px;top:265px'><span class='dr'>8OOE</span>      <span class='gr'>OE        </span><span class='bl'>INC    </span><span class='bl'>R6</span></div>
<div class='m' style='left:216px;top:286px'><span class='dr'>8OOF</span>      <span class='gr'>OF        </span><span class='bl'>INC    </span><span class='bl'>R7</span></div>
<div class='m' style='left:216px;top:307px'><span class='dr'>8O1O</span>      <span class='gr'>84        </span><span class='bl'>DIV    </span><span class='bl'>AB</span></div>
<div class='m' style='left:216px;top:328px'><span class='dr'>8O11</span>      <span class='gr'>FO        </span><span class='bl'>MOVX   </span><span class='bl'>@DPTR,A</span></div>
<div class='m' style='left:216px;top:349px'><span class='dr'>8O12</span>      <span class='gr'>EO        </span><span class='bl'>MOVX   </span><span class='bl'>A,@DPTR</span></div>
<div class='m' style='left:569px;top:97px'><span class='bl'> B</span><span class='cg'>:</span><span class='bk'>OO</span>  <span class='bl'>ACC</span><span class='cg'>:</span><span class='rd'>2O</span><span class='bl'>     TMOD</span><span class='cg'>:</span><span class='bk'>OO</span></div>
<div class='m' style='left:569px;top:118px'><span class='bl'>PO</span><span class='cg'>:</span><span class='bk'>FF</span>  <span class='bl'>PSW</span><span class='cg'>:</span><span class='bk'>OO</span><span class='bl'>     TCON</span><span class='cg'>:</span><span class='bk'>OO</span></div>
<div class='m' style='left:569px;top:139px'><span class='bl'>P1</span><span class='cg'>:</span><span class='bk'>FF</span>  <span class='bl'>THO</span><span class='cg'>:</span><span class='bk'>OO</span><span class='bl'>     SCON</span><span class='cg'>:</span><span class='bk'>FF</span></div>
<div class='m' style='left:569px;top:160px'><span class='bl'>P2</span><span class='cg'>:</span><span class='bk'>FF</span>  <span class='bl'>TLO</span><span class='cg'>:</span><span class='bk'>OO</span><span class='bl'>     PCON</span><span class='cg'>:</span><span class='bk'>7O</span></div>
<div class='m' style='left:569px;top:181px'><span class='bl'>P3</span><span class='cg'>:</span><span class='bk'>FB</span>  <span class='bl'>TH1</span><span class='cg'>:</span><span class='bk'>OO</span><span class='bl'>    T2CON</span><span class='cg'>:</span><span class='bk'>OO</span></div>
<div class='m' style='left:569px;top:202px'><span class='bl'>RO</span><span class='cg'>:</span><span class='bk'>OO</span>  <span class='bl'>TL1</span><span class='cg'>:</span><span class='bk'>OO</span><span class='bl'>    T2MOD</span><span class='cg'>:</span><span class='rd'>O1</span></div>
<div class='m' style='left:569px;top:223px'><span class='bl'>R1</span><span class='cg'>:</span><span class='bk'>OO</span>  <span class='bl'>TH2</span><span class='cg'>:</span><span class='bk'>OO</span><span class='bl'>       SP</span><span class='cg'>:</span><span class='rd'>11</span></div>
<div class='m' style='left:569px;top:244px'><span class='bl'>R2</span><span class='cg'>:</span><span class='bk'>OO</span>  <span class='bl'>TL2</span><span class='cg'>:</span><span class='bk'>OO</span></div>
<div class='m' style='left:569px;top:265px'><span class='bl'>R3</span><span class='cg'>:</span><span class='bk'>OO</span>  <span class='bl'> IP</span><span class='cg'>:</span><span class='rd'>C1</span></div>
<div class='m' style='left:569px;top:286px'><span class='bl'>R4</span><span class='cg'>:</span><span class='bk'>OO</span>  <span class='bl'> IE</span><span class='cg'>:</span><span class='rd'>CO</span></div>
<div class='m' style='left:569px;top:307px'><span class='bl'>R5</span><span class='cg'>:</span><span class='bk'>OO</span>  <span class='bl'> PC</span><span class='cg'>:</span><span class='rd'>8OB6</span></div>
<div class='m' style='left:569px;top:328px'><span class='bl'>R6</span><span class='cg'>:</span><span class='bk'>OO</span>  <span class='bl'> DPTR</span><span class='cg'>:</span><span class='rd'>FFOO</span></div>
<div class='m' style='left:569px;top:349px'><span class='bl'>R7</span><span class='cg'>:</span><span class='bk'>OO</span>  <span class='bl'>RCAP2</span><span class='cg'>:</span><span class='bk'>OOOO</span></div>
<div class='m' style='left:792px;top:97px'>   <span class='bl'>CY</span><span class='cg'>:</span><span class='bk'>O</span>   <span class='bl'>INTO</span><span class='cg'>:</span><span class='bk'>O</span>   <span class='bl'>PT1</span><span class='cg'>:</span><span class='bk'>O</span></div>
<div class='m' style='left:792px;top:118px'>   <span class='bl'>AC</span><span class='cg'>:</span><span class='bk'>O</span>   <span class='bl'>INT1</span><span class='cg'>:</span><span class='bk'>1</span>   <span class='bl'>PT2</span><span class='cg'>:</span><span class='bk'>O</span></div>
<div class='m' style='left:792px;top:139px'>   <span class='bl'>FO</span><span class='cg'>:</span><span class='bk'>O</span>   <span class='bl'>SMOD</span><span class='cg'>:</span><span class='bk'>O</span>   <span class='bl'>EXO</span><span class='cg'>:</span><span class='bk'>O</span></div>
<div class='m' style='left:792px;top:160px'>   <span class='bl'>OV</span><span class='cg'>:</span><span class='bk'>O</span>   <span class='bl'>EXF2</span><span class='cg'>:</span><span class='bk'>O</span>   <span class='bl'>EX1</span><span class='cg'>:</span><span class='bk'>O</span></div>
<div class='m' style='left:792px;top:181px'>    <span class='bl'>P</span><span class='cg'>:</span><span class='bk'>O</span>    <span class='bl'>TRO</span><span class='cg'>:</span><span class='bk'>O</span>   <span class='bl'>ETO</span><span class='cg'>:</span><span class='bk'>O</span></div>
<div class='m' style='left:792px;top:202px'>   <span class='bl'>TI</span><span class='cg'>:</span><span class='bk'>1</span>    <span class='bl'>TR1</span><span class='cg'>:</span><span class='bk'>O</span>   <span class='bl'>ET1</span><span class='cg'>:</span><span class='bk'>O</span></div>
<div class='m' style='left:792px;top:223px'>   <span class='bl'>RI</span><span class='cg'>:</span><span class='bk'>1</span>    <span class='bl'>TR2</span><span class='cg'>:</span><span class='bk'>O</span>   <span class='bl'>ET2</span><span class='cg'>:</span><span class='bk'>O</span></div>
<div class='m' style='left:792px;top:244px'>   <span class='bl'>TO</span><span class='cg'>:</span><span class='bk'>1</span>    <span class='bl'>GFO</span><span class='cg'>:</span><span class='bk'>O</span>   <span class='bl'>REN</span><span class='cg'>:</span><span class='bk'>1</span></div>
<div class='m' style='left:792px;top:265px'>   <span class='bl'>T1</span><span class='cg'>:</span><span class='bk'>1</span>    <span class='bl'>GF1</span><span class='cg'>:</span><span class='bk'>O</span>   <span class='bl'>TBE</span><span class='cg'>:</span><span class='bk'>1</span></div>
<div class='m' style='left:792px;top:286px'>   <span class='bl'>PS</span><span class='cg'>:</span><span class='rd'>1</span>    <span class='bl'>PXO</span><span class='cg'>:</span><span class='rd'>1</span>   <span class='bl'>RDE</span><span class='cg'>:</span><span class='bk'>1</span></div>
<div class='m' style='left:792px;top:307px'>   <span class='bl'>ES</span><span class='cg'>:</span><span class='bk'>O</span>    <span class='bl'>PX1</span><span class='cg'>:</span><span class='bk'>O</span>   <span class='bl'>ITO</span><span class='cg'>:</span><span class='bk'>O</span></div>
<div class='m' style='left:792px;top:328px'>   <span class='bl'>EA</span><span class='cg'>:</span><span class='rd'>1</span>    <span class='bl'>PTO</span><span class='cg'>:</span><span class='bk'>O</span>   <span class='bl'>IT1</span><span class='cg'>:</span><span class='bk'>O</span></div>
<div class='m' style='left:792px;top:349px'><span class='bl'>GATEO</span><span class='cg'>:</span><span class='bk'>O</span>  <span class='bl'>GATE1</span><span class='cg'>:</span><span class='bk'>O</span>  <span class='bl'>T2OE</span><span class='cg'>:</span><span class='rd'>O</span></div>
<div class='m' style='left:216px;top:398px'><span class='bl'>OO</span><span class='bk'>    OO  OO  OO  OO  OO  OO  OO  OO</span></div>
<div class='m' style='left:216px;top:420px'><span class='bl'>O8</span><span class='bk'>    OO  2B  81  O2  OO  OO  31  8O</span></div>
<div class='m' style='left:216px;top:442px'><span class='bl'>1O</span><span class='bk'>    4B  8O  B6  8O  FF  OO  OO  2O</span></div>
<div class='m' style='left:216px;top:464px'><span class='bl'>18</span><span class='bk'>    O1  OO  OO  OO  OO  OO  OO  OO</span></div>
<div class='m' style='left:216px;top:486px'><span class='bl'>2O</span><span class='bk'>    OO  OO  OO  OO  OO  OO  OO  OO</span></div>
<div class='m' style='left:216px;top:508px'><span class='bl'>28</span><span class='bk'>    OO  OO  OO  OO  OO  OO  OO  OO</span></div>
<div class='m' style='left:216px;top:530px'><span class='bl'>3O</span><span class='bk'>    OO  OO  OO  OO  OO  OO  OO  OO</span></div>
<div class='m' style='left:216px;top:552px'><span class='bl'>38</span><span class='bk'>    OO  OO  OO  OO  OO  OO  OO  OO</span></div>
<div class='m' style='left:216px;top:574px'><span class='bl'>4O</span><span class='bk'>    OO  OO  OO  OO  OO  OO  OO  OO</span></div>
<div class='m' style='left:216px;top:596px'><span class='bl'>48</span><span class='bk'>    OO  OO  OO  OO  OO  OO  OO  OO</span></div>
<div class='m' style='left:216px;top:618px'><span class='bl'>5O</span><span class='bk'>    OO  OO  OO  OO  OO  OO  OO  OO</span></div>
<div class='m' style='left:216px;top:640px'><span class='bl'>58</span><span class='bk'>    OO  OO  OO  OO  OO  OO  OO  OO</span></div>
<div class='m' style='left:216px;top:662px'><span class='bl'>6O</span><span class='bk'>    OO  OO  OO  OO  OO  OO  OO  OO</span></div>
<div class='m' style='left:216px;top:684px'><span class='bl'>68</span><span class='bk'>    OO  OO  OO  OO  OO  OO  OO  OO</span></div>
<div class='m' style='left:565px;top:398px'><span class='bl'>8OOO</span><span class='bk'> O2 81 AF O2 8O 33 O6 O7 O8 O9 OA O2 8O 34 OE OF</span></div>
<div class='m' style='left:565px;top:420px'><span class='bl'>8O1O</span><span class='bk'> 84 FO EO O2 8O 35 FO 15 82 DO EO O2 8O 36 OO OO</span></div>
<div class='m' style='left:565px;top:442px'><span class='bl'>8O2O</span><span class='bk'> OO OO OO O2 8O 37 OO OO OO OO OO O2 8O 38 12 8O</span></div>
<div class='m' style='left:565px;top:464px'><span class='bl'>8O3O</span><span class='bk'> 39 8O FE 32 32 32 32 32 32 12 81 24 75 O9 2B 75</span></div>
<div class='m' style='left:565px;top:486px'><span class='bl'>8O4O</span><span class='bk'> OA 81 75 OB O2 75 82 OO 12 8O B6 75 O9 41 75 OA</span></div>
<div class='m' style='left:565px;top:508px'><span class='bl'>8O5O</span><span class='bk'> 81 75 OB O2 75 82 O3 12 8O B6 75 O9 57 75 OA 81</span></div>
<div class='m' style='left:565px;top:530px'><span class='bl'>8O6O</span><span class='bk'> 75 OB O2 75 82 O4 12 8O B6 75 O9 6D 75 OA 81 75</span></div>
<div class='m' style='left:565px;top:552px'><span class='bl'>8O7O</span><span class='bk'> OO OO OO OO OO OO OO OO OO OO OO OO OO OO OO OO</span></div>
<div class='m' style='left:565px;top:574px'><span class='bl'>8O8O</span><span class='bk'> OO OO OO OO OO OO OO OO OO OO OO OO OO OO OO OO</span></div>
<div class='m' style='left:565px;top:596px'><span class='bl'>8O9O</span><span class='bk'> OO OO OO OO OO OO OO OO OO OO OO OO OO OO OO OO</span></div>
<div class='m' style='left:565px;top:618px'><span class='bl'>8OAO</span><span class='bk'> OO OO OO OO OO OO OO OO OO OO OO OO OO OO OO OO</span></div>
<div class='m' style='left:565px;top:640px'><span class='bl'>8OBO</span><span class='bk'> OO OO OO OO OO OO OO OO OO OO OO OO OO OO OO OO</span></div>
<div class='m' style='left:565px;top:662px'><span class='bl'>8OCO</span><span class='bk'> OO OO OO OO OO OO OO OO OO OO OO OO OO OO OO OO</span></div>
<div class='m' style='left:565px;top:684px'><span class='bl'>8ODO</span><span class='bk'> OO OO OO OO OO OO OO OO OO OO OO OO OO OO OO OO</span></div>
<div class='a' style='left:537px;top:77px;width:17px;height:295px;background:#F7F6F1'></div>
<div class='a' style='left:537px;top:77px;width:17px;height:17px;background:#ECE9D8;box-shadow:inset 1px 1px 0 #F4F3EC,inset 2px 2px 0 #fff,inset -1px -1px 0 #716F64,inset -2px -2px 0 #ACA899'><svg class='a' style='left:0;top:0' width='17' height='17'><path d='M5 10.5 L8.5 7 L12 10.5 Z' fill='#000'/></svg></div>
<div class='a' style='left:537px;top:355px;width:17px;height:17px;background:#ECE9D8;box-shadow:inset 1px 1px 0 #F4F3EC,inset 2px 2px 0 #fff,inset -1px -1px 0 #716F64,inset -2px -2px 0 #ACA899'><svg class='a' style='left:0;top:0' width='17' height='17'><path d='M5 7 L8.5 10.5 L12 7 Z' fill='#000'/></svg></div>
<div class='a' style='left:539px;top:222px;width:13px;height:7px;border-radius:2px;background:linear-gradient(#C6D4F7,#A9BFF4);border-bottom:1px solid #7B95E0'></div>
<div class='a' style='left:994px;top:77px;width:17px;height:295px;background:repeating-conic-gradient(#ECE9D8 0 25%,#FFFFFF 0 50%) 0 0/2px 2px'></div>
<div class='a' style='left:994px;top:77px;width:17px;height:17px;background:#ECE9D8;box-shadow:inset 1px 1px 0 #F4F3EC,inset 2px 2px 0 #fff,inset -1px -1px 0 #716F64,inset -2px -2px 0 #ACA899'><svg class='a' style='left:0;top:0' width='17' height='17'><path d='M5 10.5 L8.5 7 L12 10.5 Z' fill='#000'/></svg></div>
<div class='a' style='left:994px;top:94px;width:17px;height:242px;background:#ECE9D8;box-shadow:inset 1px 1px 0 #F4F3EC,inset 2px 2px 0 #fff,inset -1px -1px 0 #716F64,inset -2px -2px 0 #ACA899'></div>
<div class='a' style='left:994px;top:355px;width:17px;height:17px;background:#ECE9D8;box-shadow:inset 1px 1px 0 #F4F3EC,inset 2px 2px 0 #fff,inset -1px -1px 0 #716F64,inset -2px -2px 0 #ACA899'><svg class='a' style='left:0;top:0' width='17' height='17'><path d='M5 7 L8.5 10.5 L12 7 Z' fill='#000'/></svg></div>
<div class='a' style='left:537px;top:377px;width:17px;height:334px;background:repeating-conic-gradient(#ECE9D8 0 25%,#FFFFFF 0 50%) 0 0/2px 2px'></div>
<div class='a' style='left:537px;top:377px;width:17px;height:17px;background:#ECE9D8;box-shadow:inset 1px 1px 0 #F4F3EC,inset 2px 2px 0 #fff,inset -1px -1px 0 #716F64,inset -2px -2px 0 #ACA899'><svg class='a' style='left:0;top:0' width='17' height='17'><path d='M5 10.5 L8.5 7 L12 10.5 Z' fill='#000'/></svg></div>
<div class='a' style='left:537px;top:394px;width:17px;height:132px;background:#ECE9D8;box-shadow:inset 1px 1px 0 #F4F3EC,inset 2px 2px 0 #fff,inset -1px -1px 0 #716F64,inset -2px -2px 0 #ACA899'></div>
<div class='a' style='left:537px;top:694px;width:17px;height:17px;background:#ECE9D8;box-shadow:inset 1px 1px 0 #F4F3EC,inset 2px 2px 0 #fff,inset -1px -1px 0 #716F64,inset -2px -2px 0 #ACA899'><svg class='a' style='left:0;top:0' width='17' height='17'><path d='M5 7 L8.5 10.5 L12 7 Z' fill='#000'/></svg></div>
<div class='a' style='left:994px;top:377px;width:17px;height:334px;background:repeating-conic-gradient(#ECE9D8 0 25%,#FFFFFF 0 50%) 0 0/2px 2px'></div>
<div class='a' style='left:994px;top:377px;width:17px;height:17px;background:#ECE9D8;box-shadow:inset 1px 1px 0 #F4F3EC,inset 2px 2px 0 #fff,inset -1px -1px 0 #716F64,inset -2px -2px 0 #ACA899'><svg class='a' style='left:0;top:0' width='17' height='17'><path d='M5 10.5 L8.5 7 L12 10.5 Z' fill='#000'/></svg></div>
<div class='a' style='left:994px;top:542px;width:17px;height:7px;background:#ECE9D8;box-shadow:inset 1px 1px 0 #F4F3EC,inset 2px 2px 0 #fff,inset -1px -1px 0 #716F64,inset -2px -2px 0 #ACA899'></div>
<div class='a' style='left:994px;top:694px;width:17px;height:17px;background:#ECE9D8;box-shadow:inset 1px 1px 0 #F4F3EC,inset 2px 2px 0 #fff,inset -1px -1px 0 #716F64,inset -2px -2px 0 #ACA899'><svg class='a' style='left:0;top:0' width='17' height='17'><path d='M5 7 L8.5 10.5 L12 7 Z' fill='#000'/></svg></div>
<div class='a' style='left:0;top:713px;width:1024px;height:1px;background:#716F64'></div>
<div class='a' style='left:0;top:714px;width:1024px;height:2px;background:#F4F3EC'></div>
<div class='a' style='left:0;top:716px;width:1024px;height:1px;background:#ACA899'></div>
<div class='a' style='left:0;top:733px;width:1024px;height:1px;background:#FAF8EE'></div>
<div class='a' style='left:0;top:734px;width:1024px;height:4px;background:linear-gradient(#3A86E8,#2C74DC)'></div>
<div class='s' style='left:1px;top:718px'>Ready</div>
<div class='a' style='left:751px;top:716px;width:68px;height:17px;border:1px solid #C9C6B5;border-right-color:#F6F5EF;border-bottom-color:#F6F5EF'></div>
<div class='s' style='left:752px;top:718px;letter-spacing:-0.45px'>COM1 - OK</div>
<div class='a' style='left:821px;top:716px;width:28px;height:17px;border:1px solid #C9C6B5;border-right-color:#F6F5EF;border-bottom-color:#F6F5EF'></div>
<div class='s' style='left:822px;top:718px;letter-spacing:0px'>RB0</div>
<div class='a' style='left:851px;top:716px;width:171px;height:17px;border:1px solid #C9C6B5;border-right-color:#F6F5EF;border-bottom-color:#F6F5EF'></div>
<div class='s' style='left:852px;top:718px;letter-spacing:0px'>Break if PC = 8039H</div>
</body></html>
